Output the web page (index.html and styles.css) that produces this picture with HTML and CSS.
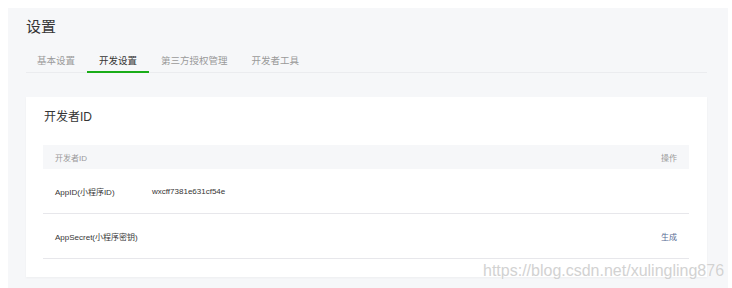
FILE: index.html
```html
<!DOCTYPE html>
<html lang="zh-CN">
<head>
  <meta charset="UTF-8">
  <title>设置</title>
  <link rel="stylesheet" href="styles.css">
</head>
<body>

<div class="panel">
  <h1 class="page-title">设置</h1>

  <nav class="tabs">
    <a class="tab">基本设置</a>
    <a class="tab active">开发设置</a>
    <a class="tab">第三方授权管理</a>
    <a class="tab">开发者工具</a>
  </nav>

  <section class="card">
    <h2 class="card-title">开发者ID</h2>
    <div class="table">
      <div class="row head">
        <span>开发者ID</span>
        <span></span>
        <span>操作</span>
      </div>
      <div class="row">
        <span>AppID(小程序ID)</span>
        <span>wxcff7381e631cf54e</span>
        <span></span>
      </div>
      <div class="row">
        <span>AppSecret(小程序密钥)</span>
        <span></span>
        <a class="link">生成</a>
      </div>
    </div>
  </section>
</div>

<div class="watermark">https://blog.csdn.net/xulingling876</div>

</body>
</html>
```

FILE: styles.css
```css
* {
  box-sizing: border-box;
}

body {
  margin: 0;
  background: #fff;
  color: #353535;
  font-family: "Liberation Sans", "Noto Sans CJK SC", sans-serif;
}

.panel {
  margin: 8px 0 0 8px;
  width: 720px;
  min-height: 280px;
  padding: 6px 21px 0 18px;
  background: #f6f7f9;
}

.page-title {
  margin: 0;
  font-size: 15px;
  line-height: 26px;
  font-weight: normal;
}

.tabs {
  display: flex;
  border-bottom: 1px solid #ebecef;
}

.tab {
  padding: 14px 12px 3px;
  margin-bottom: -1px;
  margin-left: -1px;
  margin-right: 1px;
  font-size: 9.5px;
  line-height: 14px;
  color: #9a9a9a;
  border-bottom: 2px solid transparent;
}

.tab.active {
  color: #353535;
  border-bottom-color: #1aad19;
}

.card {
  margin-top: 24px;
  padding: 12px 18px 18px 17px;
  background: #fff;
  box-shadow: 0 1px 2px rgba(0, 0, 0, 0.04);
}

.card-title {
  margin: 0 0 20px 1px;
  font-size: 12px;
  line-height: 16px;
  font-weight: normal;
}

.row {
  display: grid;
  grid-template-columns: 97px 1fr auto;
  align-items: center;
  height: 45px;
  padding: 0 12px;
  font-size: 8px;
  border-bottom: 1px solid #e7e7eb;
}

.row.head {
  height: 24px;
  background: #f6f7f9;
  color: #9a9a9a;
  border-bottom: none;
}

.link {
  color: #576b95;
}

.watermark {
  position: absolute;
  left: 483px;
  top: 263px;
  font-size: 16px;
  line-height: 16px;
  color: #d2d2d2;
  text-shadow: 0 0 1px #fff, 0 0 1px #fff;
}
```
